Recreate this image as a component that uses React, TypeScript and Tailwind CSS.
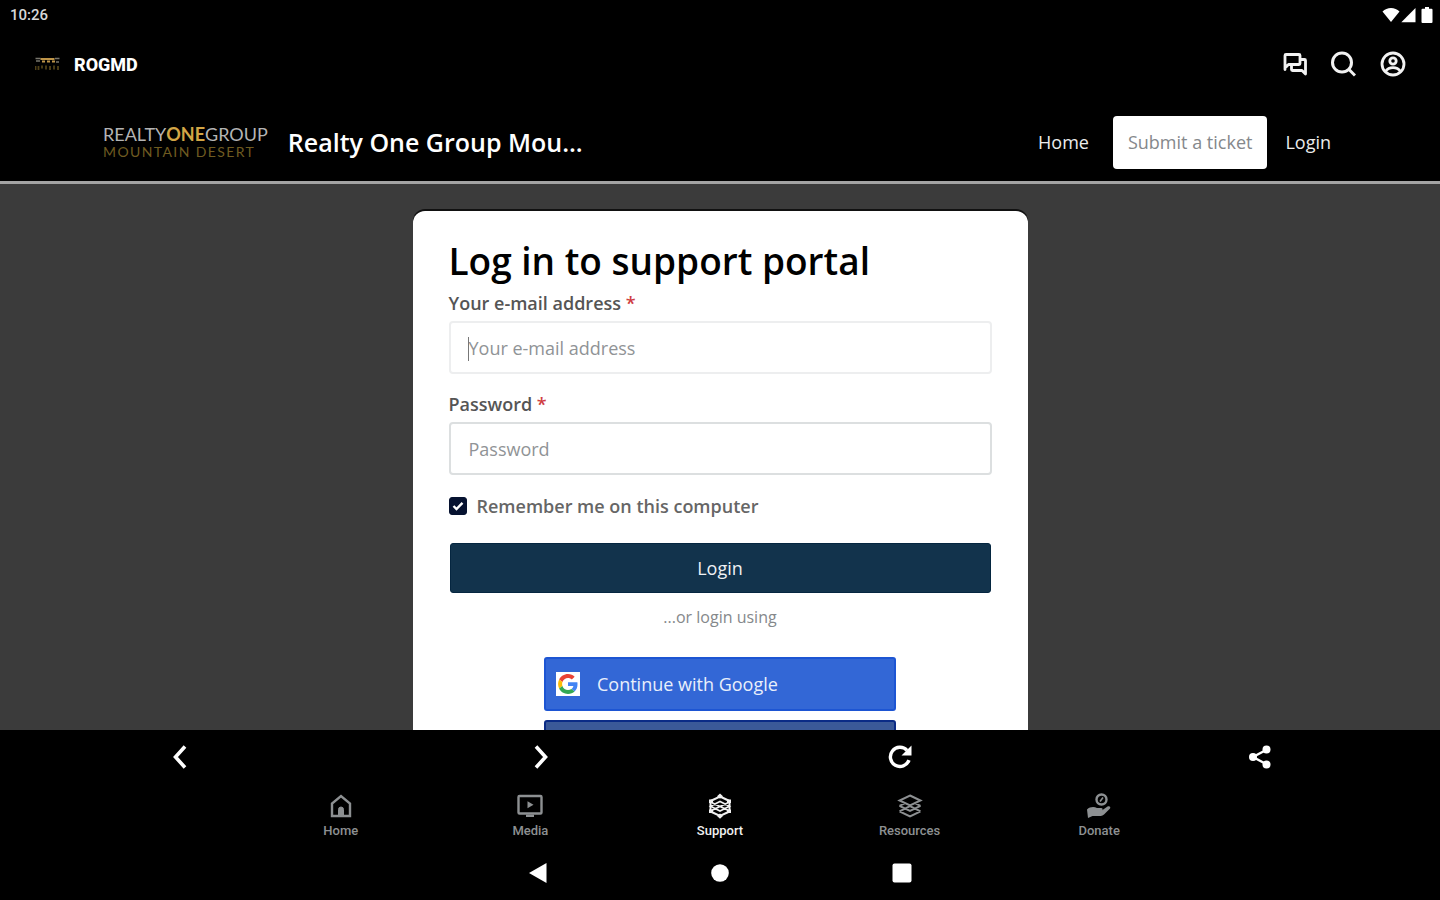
import type { ReactNode } from "react";

function StatusBar() {
  return (
    <div className="flex h-[30px] shrink-0 items-center justify-between pr-[7px] pl-[10px] font-['Roboto',sans-serif] text-[15px] font-medium text-[#d8d8d8]">
      <span>10:26</span>
      <div className="flex items-center gap-px text-white">
        <svg width="18" height="16" viewBox="0 0 18 16" fill="currentColor" aria-hidden="true">
          <path d="M9 15 0.5 4.6C2.8 2.3 5.7 1 9 1s6.2 1.3 8.5 3.6z" />
        </svg>
        <svg width="15" height="16" viewBox="0 0 15 16" fill="currentColor" aria-hidden="true">
          <path d="M14.5 1v14.2H0.3z" />
        </svg>
        <svg className="ml-1" width="12" height="16" viewBox="0 0 12 16" fill="currentColor" aria-hidden="true">
          <path d="M4 0h4v1.8h2.5a1 1 0 0 1 1 1V15a1 1 0 0 1-1 1h-9a1 1 0 0 1-1-1V2.8a1 1 0 0 1 1-1H4z" />
        </svg>
      </div>
    </div>
  );
}

function ChatIcon() {
  return (
    <svg width="26" height="26" viewBox="0 0 26 26" fill="none" stroke="currentColor" strokeWidth="2.8" strokeLinejoin="round" aria-hidden="true">
      <path d="M3 18.5V4.5a1 1 0 0 1 1-1h13a1 1 0 0 1 1 1v8a1 1 0 0 1-1 1H6.5L3 17z" />
      <path d="M18 8.5h4.5a1 1 0 0 1 1 1v13.5L20 19.5H10.5a1 1 0 0 1-1-1v-5" />
    </svg>
  );
}

function SearchIcon() {
  return (
    <svg width="26" height="26" viewBox="0 0 26 26" fill="none" stroke="currentColor" strokeWidth="3" aria-hidden="true">
      <circle cx="12" cy="11.5" r="9.5" />
      <path d="m19 18.500 6 6" />
    </svg>
  );
}

function AccountIcon() {
  return (
    <svg width="30" height="30" viewBox="0 0 30 30" fill="none" stroke="currentColor" strokeWidth="2.8" aria-hidden="true">
      <circle cx="15" cy="15" r="11" />
      <circle cx="15" cy="12" r="3.2" />
      <path d="M7.500 22.500c1.800-2.600 4.500-3.800 7.500-3.800s5.700 1.200 7.500 3.800" />
    </svg>
  );
}

function ReloadIcon() {
  return (
    <svg width="26" height="26" viewBox="0 0 26 26" fill="none" stroke="currentColor" strokeWidth="3.4" aria-hidden="true">
      <path d="M22 16.200A9.600 9.600 0 1 1 20 6.300" />
      <path d="M24.500 1.500v10h-10z" fill="currentColor" stroke="none" />
    </svg>
  );
}

function ShareIcon() {
  return (
    <svg width="26" height="26" viewBox="0 0 26 26" fill="currentColor" stroke="currentColor" strokeWidth="2.4" aria-hidden="true">
      <path d="M20 5.500 6 13l14 7.500" fill="none" />
      <circle cx="6" cy="13" r="4" stroke="none" />
      <circle cx="19.500" cy="5.500" r="4" stroke="none" />
      <circle cx="19.500" cy="20.500" r="4" stroke="none" />
    </svg>
  );
}

function AppBar() {
  return (
    <div className="flex h-[68px] shrink-0 items-center justify-between pr-8 pl-[35px]">
      <div className="flex items-center gap-[14px]">
        <svg width="25" height="14" viewBox="0 0 25 14" aria-hidden="true">
          <path d="M0.5 1.5h5M1 4h4M20 1.5h4.5M21 5h3" stroke="#77756c" strokeWidth="1.6" />
          <path d="M5.5 2h14M7 4.5h3M12 4.5h3M17 4.5h3" stroke="#bd9448" strokeWidth="2.2" />
          <path d="M0.5 9v4M3.5 9v4M7 8.5v3M11 8.5v4M15 9v4M19 8.5v4M23 9v4" stroke="#4f4018" strokeWidth="1.8" />
        </svg>
        <span className="font-['Roboto',sans-serif] text-[18px] font-extrabold text-white">ROGMD</span>
      </div>
      <div className="flex items-center gap-[22px] text-[#f2f2f2]">
        <button type="button" aria-label="Messages"><ChatIcon /></button>
        <button type="button" aria-label="Search"><SearchIcon /></button>
        <button type="button" aria-label="Account"><AccountIcon /></button>
      </div>
    </div>
  );
}

function PortalHeader() {
  return (
    <header className="flex h-[86px] shrink-0 items-center justify-between border-b-[3px] border-[#a3a3a3] pt-[6px] pr-[93px] pl-[103px]">
      <div className="flex items-center gap-5">
        <div className="font-['Lato',sans-serif] whitespace-nowrap">
          <div className="text-[18px] leading-[18px] text-[#b4b4b4]">
            REALTY<span className="font-bold text-[#d2a646]">ONE</span>GROUP
          </div>
          <div className="text-[14px] leading-[17px] tracking-widest text-[#6f5b20]">MOUNTAIN DESERT</div>
        </div>
        <h1 className="text-[25px] font-semibold whitespace-nowrap text-white">Realty One Group Mou...</h1>
      </div>
      <nav className="flex items-center text-[18px] font-medium text-[#ececec]">
        <a href="#home" className="px-6">Home</a>
        <a href="#ticket" className="flex h-[53px] items-center rounded bg-white px-[15px] text-[#85888b]">Submit a ticket</a>
        <a href="#login" className="pr-4 pl-[18px]">Login</a>
      </nav>
    </header>
  );
}

function Field({ id, label, type, caret, border }: { id: string; label: string; type: string; caret?: boolean; border: string }) {
  return (
    <div>
      <label htmlFor={id} className="block text-[18px] leading-6 font-semibold text-[#555]">
        {label} <span className="text-[#cf3d43]">*</span>
      </label>
      <div className="relative mt-[6px]">
        <input
          id={id}
          type={type}
          placeholder={label}
          className={"h-[53px] w-full rounded border-2 bg-white px-[18px] text-[18px] text-[#333] outline-none placeholder:text-[#909396] " + border}
        />
        {caret && <span className="absolute top-4 left-[19px] h-6 w-px bg-[#777]" />}
      </div>
    </div>
  );
}

function GoogleLogo() {
  return (
    <svg width="24" height="24" viewBox="-5 -5 58 58" className="bg-white" aria-hidden="true">
      <path fill="#EA4335" d="M24 9.500c3.540 0 6.710 1.220 9.210 3.600l6.850-6.850C35.900 2.380 30.470 0 24 0 14.620 0 6.510 5.380 2.560 13.220l7.980 6.190C12.430 13.720 17.740 9.500 24 9.500z" />
      <path fill="#4285F4" d="M46.980 24.550c0-1.570-.15-3.090-.38-4.550H24v9.020h12.940c-.58 2.960-2.260 5.480-4.780 7.180l7.730 6c4.510-4.180 7.090-10.360 7.090-17.650z" />
      <path fill="#FBBC05" d="M10.530 28.590c-.48-1.450-.76-2.990-.76-4.590s.27-3.140.76-4.590l-7.980-6.190C.92 16.460 0 20.120 0 24c0 3.880.92 7.540 2.560 10.780l7.970-6.190z" />
      <path fill="#34A853" d="M24 48c6.480 0 11.930-2.130 15.890-5.810l-7.730-6c-2.150 1.450-4.920 2.300-8.160 2.300-6.260 0-11.570-4.220-13.470-9.910l-7.980 6.190C6.510 42.620 14.620 48 24 48z" />
    </svg>
  );
}

function LoginCard() {
  return (
    <form className="mx-auto w-full max-w-[615px] rounded-t-xl bg-white px-9 pt-6 shadow-[0_-2px_0_#111]" onSubmit={(e) => e.preventDefault()}>
      <h2 className="text-[37px] leading-[52px] font-semibold text-black">Log in to support portal</h2>
      <div className="mt-1 flex flex-col gap-[18px]">
        <Field id="email" label="Your e-mail address" type="email" caret border="border-[#edeeef]" />
        <Field id="password" label="Password" type="password" border="border-[#dcdfe0]" />
      </div>
      <label className="mt-[19px] flex items-center gap-[10px] text-[18px] leading-6 font-semibold text-[#666]">
        <span className="relative flex size-[18px]">
          <input type="checkbox" defaultChecked className="peer size-[18px] appearance-none rounded-[3px] border border-[#061230] bg-white checked:bg-[#061230]" />
          <svg className="pointer-events-none absolute inset-0 hidden peer-checked:block" viewBox="0 0 18 18" fill="none" stroke="#fff" strokeWidth="2.4" aria-hidden="true">
            <path d="m4.500 9 3 3 6-6.200" />
          </svg>
        </span>
        Remember me on this computer
      </label>
      <div className="px-px">
        <button type="submit" className="mt-[25px] h-[50px] w-full rounded-[3px] border border-[#052640] bg-[#12334c] text-[18px] font-medium text-[#eef1f4]">Login</button>
      </div>
      <p className="mt-3 text-center text-[16px] leading-6 text-[#85888b]">...or login using</p>
      <div className="mx-auto mt-7 flex max-w-[352px] flex-col gap-[9px]">
        <button type="button" className="flex h-[54px] items-center gap-[17px] rounded-[3px] border-2 border-[#1d55d3] bg-[#3367d6] px-[10px] text-[18px] font-medium text-[#e9effb]">
          <GoogleLogo />
          Continue with Google
        </button>
        <button type="button" aria-label="Continue with Facebook" className="h-[54px] rounded-[3px] border-2 border-[#0b2b86] bg-[#3b5998]" />
      </div>
    </form>
  );
}

function BrowserControls() {
  return (
    <div className="grid h-[54px] shrink-0 grid-cols-4 text-white">
      <button type="button" aria-label="Back" className="flex items-center justify-center">
        <svg width="24" height="24" viewBox="0 0 24 24" fill="none" stroke="currentColor" strokeWidth="3.6" aria-hidden="true"><path d="M17 1.500 7.500 12 17 22.500" /></svg>
      </button>
      <button type="button" aria-label="Forward" className="flex items-center justify-center">
        <svg width="24" height="24" viewBox="0 0 24 24" fill="none" stroke="currentColor" strokeWidth="3.6" aria-hidden="true"><path d="M8 1.500 17.500 12 8 22.500" /></svg>
      </button>
      <button type="button" aria-label="Reload" className="flex items-center justify-center"><ReloadIcon /></button>
      <button type="button" aria-label="Share" className="flex items-center justify-center"><ShareIcon /></button>
    </div>
  );
}

function TabIcon({ children }: { children: ReactNode }) {
  return (
    <svg width="26" height="26" viewBox="0 0 26 26" fill="none" stroke="currentColor" strokeWidth="2.4" aria-hidden="true">
      {children}
    </svg>
  );
}

const tabs = [
  {
    name: "Home",
    icon: (
      <>
        <path d="M4 23V10.500L13 3l9 7.500V23z" />
        <path d="M10.500 22v-5.500a2.500 2.500 0 0 1 5 0V22z" fill="currentColor" strokeWidth="1" />
      </>
    ),
  },
  {
    name: "Media",
    icon: (
      <>
        <rect x="1.500" y="3" width="23" height="17.500" rx="1" />
        <path d="M9 22.800h8" />
        <path d="M10.500 8.200v7l6-3.500z" fill="currentColor" stroke="none" />
      </>
    ),
  },
  {
    name: "Support",
    active: true,
    icon: (
      <>
        <path d="M13 3.500 22.500 8v10.500L13 23l-9.500-4.500V8z" strokeWidth="2" />
        <path d="M3.500 9 13 13.500 22.500 9M3.500 18l9.500-4.500 9.500 4.500M3.500 13.200 13 8.500l9.500 4.700L13 18z" strokeWidth="1.6" />
        <path d="M13 0.500l3 2.700-3 2.600-3-2.600zM13 20.500l3 2.600-3 2.700-3-2.700zM2 6.500h4v3.500H2zM20 6.500h4v3.500h-4zM2 16.500h4V20H2zM20 16.500h4V20h-4z" fill="currentColor" stroke="none" />
      </>
    ),
  },
  {
    name: "Resources",
    icon: (
      <path d="M13 2.500 23.500 7.500 13 12.500 2.500 7.500zM2.500 12.800 13 17.800l10.500-5M2.500 18.300 13 23.500l10.500-5.200M2.500 18.300 13 13l10.500 5.300M2.500 12.800l5-2.500M23.500 12.800l-5-2.500" strokeWidth="2" />
    ),
  },
  {
    name: "Donate",
    icon: (
      <>
        <circle cx="15.500" cy="6.500" r="5" />
        <path d="m14 8.500 3-4" strokeWidth="1.6" />
        <path d="M1 16.500C4 13.700 8 13.400 11 15h4c1.800 0 2.300 1.800.8 2.600l5.700-4c2-1.200 3.700.6 2.300 2.200L18 21.600c-1 .9-2 1.300-3.200 1.300H6.500L2 25z" fill="currentColor" stroke="none" />
      </>
    ),
  },
];

function TabBar() {
  return (
    <nav className="mx-auto grid h-[62px] w-full max-w-[948px] shrink-0 grid-cols-5 font-['Roboto',sans-serif] text-[13px] leading-4 font-medium">
      {tabs.map((tab) => (
        <a
          key={tab.name}
          href={"#" + tab.name.toLowerCase()}
          className={"flex flex-col items-center gap-1 pt-[9px] " + (tab.active ? "text-[#f0f0f0]" : "text-[#8d9092]")}
        >
          <TabIcon>{tab.icon}</TabIcon>
          {tab.name}
        </a>
      ))}
    </nav>
  );
}

function SystemNav() {
  return (
    <div className="flex h-[54px] shrink-0 items-center justify-center gap-[162px] text-white">
      <button type="button" aria-label="System back">
        <svg width="20" height="20" viewBox="0 0 20 20" fill="currentColor" aria-hidden="true"><path d="M18.500 0v20L1 10z" /></svg>
      </button>
      <button type="button" aria-label="System home">
        <svg width="20" height="20" viewBox="0 0 20 20" fill="currentColor" aria-hidden="true"><circle cx="10" cy="10" r="8.800" /></svg>
      </button>
      <button type="button" aria-label="Recent apps">
        <svg width="20" height="20" viewBox="0 0 20 20" fill="currentColor" aria-hidden="true"><rect x="0.500" y="0.500" width="19" height="19" rx="2" /></svg>
      </button>
    </div>
  );
}

export default function App() {
  return (
    <div className="flex h-screen flex-col bg-black font-['Open_Sans',sans-serif]">
      <StatusBar />
      <AppBar />
      <PortalHeader />
      <main className="min-h-0 flex-1 overflow-hidden bg-[#3b3b3b] pt-[27px]">
        <LoginCard />
      </main>
      <BrowserControls />
      <TabBar />
      <SystemNav />
    </div>
  );
}
